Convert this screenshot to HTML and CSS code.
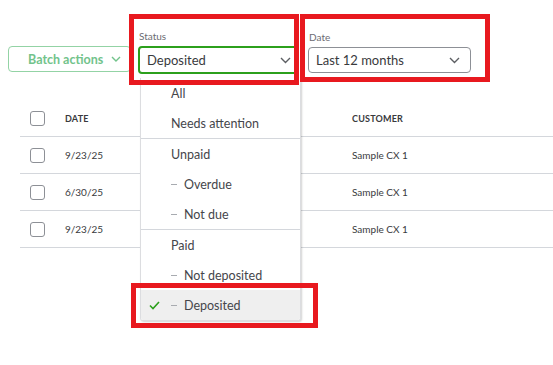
FILE: index.html
```html
<!DOCTYPE html>
<html lang="en">
<head>
<meta charset="utf-8">
<title>Invoices filter</title>
<link rel="stylesheet" href="styles.css">
</head>
<body>
<div class="page">
  <div class="toolbar">
    <button class="batch">Batch actions
      <svg class="chev" width="10" height="6" viewBox="0 0 10 6"><path d="M1 1 L5 5 L9 1" fill="none" stroke="currentColor" stroke-width="1.4"/></svg>
    </button>
    <div class="field status-field">
      <div class="label">Status</div>
      <div class="select select-active">
        <span>Deposited</span>
        <svg class="chev dark" width="11" height="7" viewBox="0 0 11 7"><path d="M1 1 L5.5 5.5 L10 1" fill="none" stroke="currentColor" stroke-width="1.4"/></svg>
      </div>
    </div>
    <div class="field date-field">
      <div class="label">Date</div>
      <div class="select">
        <span>Last 12 months</span>
        <svg class="chev dark" width="11" height="7" viewBox="0 0 11 7"><path d="M1 1 L5.5 5.5 L10 1" fill="none" stroke="currentColor" stroke-width="1.4"/></svg>
      </div>
    </div>
  </div>

  <div class="table">
    <div class="row head">
      <span class="cb"></span>
      <span class="cell">DATE</span>
      <span class="cell">CUSTOMER</span>
    </div>
    <div class="row">
      <span class="cb"></span>
      <span class="cell">9/23/25</span>
      <span class="cell">Sample CX 1</span>
    </div>
    <div class="row">
      <span class="cb"></span>
      <span class="cell">6/30/25</span>
      <span class="cell">Sample CX 1</span>
    </div>
    <div class="row">
      <span class="cb"></span>
      <span class="cell">9/23/25</span>
      <span class="cell">Sample CX 1</span>
    </div>
  </div>

  <ul class="menu">
    <li class="item">All</li>
    <li class="item">Needs attention</li>
    <li class="sep"></li>
    <li class="item">Unpaid</li>
    <li class="item sub"><span class="dash"></span>Overdue</li>
    <li class="item sub"><span class="dash"></span>Not due</li>
    <li class="sep"></li>
    <li class="item">Paid</li>
    <li class="item sub"><span class="dash"></span>Not deposited</li>
    <li class="item sub selected">
      <svg class="check" width="11" height="9" viewBox="0 0 11 9"><path d="M1 4.5 L4 7.5 L10 1" fill="none" stroke="#2ca01c" stroke-width="1.6"/></svg>
      <span class="dash"></span>Deposited</li>
  </ul>

  <div class="mark mark-status"></div>
  <div class="mark mark-date"></div>
  <div class="mark mark-deposited"></div>
</div>
</body>
</html>
```

FILE: styles.css
```css
* { box-sizing: border-box; }
html, body { margin: 0; padding: 0; background: #fff; }
body {
  font-family: Lato, "Noto Sans", sans-serif;
  color: #393a3d;
  width: 553px;
  height: 365px;
  overflow: hidden;
}
.page { position: relative; width: 553px; height: 365px; }

.toolbar {
  display: flex;
  align-items: flex-end;
  padding: 29px 0 0 8px;
}
.batch {
  width: 123px;
  height: 26px;
  margin: 0 7px 2px 0;
  border: 1px solid #93d3a5;
  border-radius: 4px;
  background: #fff;
  color: #72c38b;
  font-family: Lato, sans-serif;
  font-size: 12.5px;
  font-weight: 700;
  display: flex;
  align-items: center;
  justify-content: flex-start;
  padding: 0 0 0 19px;
  gap: 8px;
}
.chev { display: block; color: #72c38b; }
.chev.dark { color: #5d5f63; }

.field { display: flex; flex-direction: column; }
.label {
  font-size: 10px;
  line-height: 14px;
  color: #6b6c72;
  margin: 0 0 3px 1px;
}
.status-field { width: 160px; margin-right: 10px; }
.date-field { width: 163px; margin-bottom: 1px; }
.select {
  display: flex;
  align-items: center;
  justify-content: space-between;
  height: 26px;
  border: 1px solid #8d9096;
  border-radius: 4px;
  padding: 0 10px 0 7px;
  font-size: 13px;
  color: #393a3d;
}
.select-active {
  height: 28px;
  border: 2px solid #2ca01c;
  padding: 0 5px 0 7px;
}

.table { margin: 26px 0 0 20px; }
.row {
  display: grid;
  grid-template-columns: 35px 287px 1fr;
  align-items: center;
  height: 37px;
  padding-left: 10px;
  border-bottom: 1px solid #d4d7dc;
  font-size: 10px;
  color: #393a3d;
}
.row.head .cell { font-weight: 700; font-size: 9px; letter-spacing: 0.2px; color: #393a3d; }
.cb {
  width: 15px;
  height: 15px;
  border: 1px solid #8d9096;
  border-radius: 3px;
  background: #fff;
}

.menu {
  position: absolute;
  left: 140px;
  top: 78px;
  width: 161px;
  margin: 0;
  padding: 0;
  list-style: none;
  background: #fff;
  border: 1px solid #dcdde0;
  border-top: none;
  border-radius: 0 0 3px 3px;
  box-shadow: 1px 1px 2px rgba(0,0,0,0.18);
  overflow: hidden;
}
.item {
  height: 30px;
  display: flex;
  align-items: center;
  padding-left: 30px;
  font-size: 12.5px;
  color: #45464b;
  position: relative;
}
.sep { height: 1px; background: #d4d7dc; }
.dash {
  display: inline-block;
  width: 6px;
  height: 1px;
  background: #a8abb0;
  margin-right: 7px;
}
.selected { background: #efefef; }
.check { position: absolute; left: 8px; top: 11px; }

.mark {
  position: absolute;
  border: 5px solid #e8191f;
}
.mark-status { left: 129px; top: 14px; width: 170px; height: 71px; }
.mark-date { left: 300px; top: 14px; width: 190px; height: 68px; }
.mark-deposited { left: 131px; top: 283px; width: 187px; height: 45px; }
```
